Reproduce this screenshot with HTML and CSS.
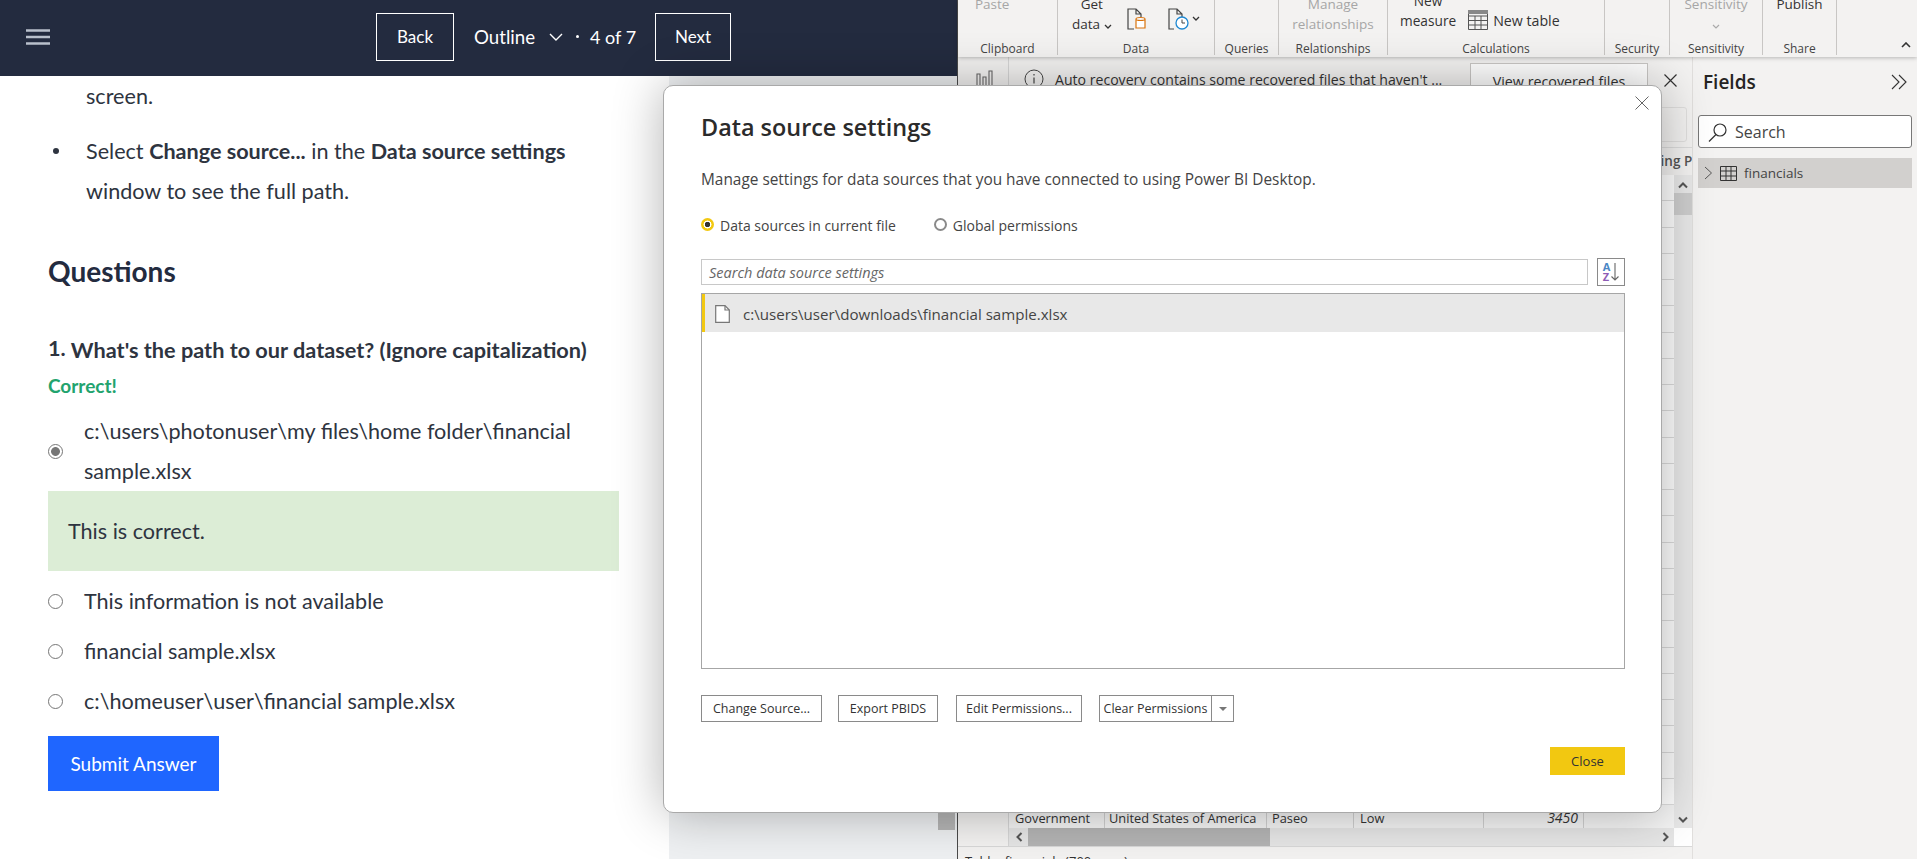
FILE: index.html
```html
<!DOCTYPE html>
<html lang="en">
<head>
  <meta charset="UTF-8" />
  <title>Data source settings</title>
  <link rel="stylesheet" href="styles.css">
</head>
<body>
  <!-- Lab guide window -->
  <section class="course">
    <header class="course-head">
      <button class="menu-btn" aria-label="Menu">
        <svg viewBox="0 0 24 16" width="24" height="16"><path d="M0 1.5h24M0 8h24M0 14.5h24" stroke="#b9c0cc" stroke-width="2.4" /></svg>
      </button>
      <nav class="pager">
        <a class="pager-btn pager-back">Back</a>
        <span class="pager-title">Outline</span>
        <svg class="pager-chev" viewBox="0 0 14 8" width="14" height="8"><path d="M1 1l6 6 6-6" fill="none" stroke="#fff" stroke-width="1.4" /></svg>
        <span class="pager-dot"></span>
        <span class="pager-count">4 of 7</span>
        <a class="pager-btn pager-next">Next</a>
      </nav>
    </header>
    <div class="course-body">
      <main class="lesson">
        <ul class="steps">
          <li class="step-cont">screen.</li>
          <li>Select <b>Change source...</b> in the <b>Data source settings</b> window to see the full path.</li>
        </ul>
        <h2>Questions</h2>
        <p class="question"><span class="q-num">1.</span> What's the path to our dataset? (Ignore capitalization)</p>
        <p class="verdict">Correct!</p>
        <label class="option option-two">
          <input type="radio" name="q1" checked>
          <span>c:\users\photonuser\my files\home folder\financial sample.xlsx</span>
        </label>
        <div class="feedback">This is correct.</div>
        <label class="option"><input type="radio" name="q1"><span>This information is not available</span></label>
        <label class="option"><input type="radio" name="q1"><span>financial sample.xlsx</span></label>
        <label class="option"><input type="radio" name="q1"><span>c:\homeuser\user\financial sample.xlsx</span></label>
        <button class="submit">Submit Answer</button>
      </main>
      <aside class="lesson-side">
        <div class="side-scroll"></div>
      </aside>
    </div>
  </section>

  <!-- Power BI window -->
  <section class="pbi">
    <div class="ribbon">
      <div class="rib-group rib-clipboard">
        <div class="rib-tools"><div class="tool off">Paste<br>&nbsp;</div></div>
        <div class="rib-label">Clipboard</div>
      </div>
      <div class="rib-group rib-data">
        <div class="rib-tools">
          <div class="tool">Get<br>data <svg class="mini" viewBox="0 0 8 5" width="8" height="5"><path d="M1 1l3 3 3-3" fill="none" stroke="#333" stroke-width="1.3" /></svg></div>
          <svg class="doc-icon" viewBox="0 0 20 22" width="20" height="22">
            <path d="M7 21H1V1h8l5 5v3M9 1v5h5" fill="none" stroke="#444" stroke-width="1.2" />
            <path d="M9 11c0-2 9-2 9 0v9H9zM9 11c0 2 9 2 9 0" fill="#fff" stroke="#d9730d" stroke-width="1.2" />
          </svg>
          <div class="doc-pair">
            <svg class="doc-icon" viewBox="0 0 21 22" width="21" height="22">
              <path d="M6 21H1V1h8l5 5v3M9 1v5h5" fill="none" stroke="#444" stroke-width="1.2" />
              <circle cx="14" cy="15" r="6" fill="#fff" stroke="#1e88d2" stroke-width="1.3" />
              <path d="M14 11.5V15h3" fill="none" stroke="#444" stroke-width="1" />
            </svg>
            <svg class="mini" viewBox="0 0 8 5" width="8" height="5"><path d="M1 1l3 3 3-3" fill="none" stroke="#333" stroke-width="1.3" /></svg>
          </div>
        </div>
        <div class="rib-label">Data</div>
      </div>
      <div class="rib-group rib-queries">
        <div class="rib-tools"></div>
        <div class="rib-label">Queries</div>
      </div>
      <div class="rib-group rib-rel">
        <div class="rib-tools"><div class="tool off">Manage<br>relationships</div></div>
        <div class="rib-label">Relationships</div>
      </div>
      <div class="rib-group rib-calc">
        <div class="rib-tools">
          <div class="tool tool-measure">New<br>measure</div>
          <div class="tool-inline">
            <svg viewBox="0 0 20 20" width="20" height="20"><path d="M.5.5h19v19H.5zM.5 6h19M.5 10.5h19M.5 15h19M7 6v13.500M13 6v13.500" fill="none" stroke="#555" /><path d="M0 0h20v4H0z" fill="#888" /></svg>
            New table
          </div>
        </div>
        <div class="rib-label">Calculations</div>
      </div>
      <div class="rib-group rib-sec">
        <div class="rib-tools"></div>
        <div class="rib-label">Security</div>
      </div>
      <div class="rib-group rib-sens">
        <div class="rib-tools"><div class="tool off">Sensitivity<br><svg class="mini" viewBox="0 0 8 5" width="8" height="5"><path d="M1 1l3 3 3-3" fill="none" stroke="#aaa" stroke-width="1.2" /></svg></div></div>
        <div class="rib-label">Sensitivity</div>
      </div>
      <div class="rib-group rib-share">
        <div class="rib-tools"><div class="tool">Publish<br>&nbsp;</div></div>
        <div class="rib-label">Share</div>
      </div>
      <div class="rib-collapse">
        <svg viewBox="0 0 10 6" width="10" height="6"><path d="M1 5l4-4 4 4" fill="none" stroke="#333" stroke-width="1.6" /></svg>
      </div>
    </div>

    <div class="pbi-main">
      <div class="report">
        <div class="report-top">
          <div class="rail">
            <svg viewBox="0 0 18 16" width="18" height="16"><path d="M1 16V4h3v12M7 16V7h3v9M13 16V1h3v15" fill="none" stroke="#666" stroke-width="1.100" /></svg>
          </div>
          <div class="canvas">
            <div class="notice">
              <svg class="notice-icon" viewBox="0 0 20 20" width="20" height="20"><circle cx="10" cy="10" r="9" fill="none" stroke="#444" /><path d="M10 8.500v6M10 5v1.500" stroke="#444" stroke-width="1.200" /></svg>
              <span class="notice-text">Auto recovery contains some recovered files that haven't ...</span>
              <span class="notice-btn">View recovered files</span>
              <svg class="notice-x" viewBox="0 0 13 13" width="13" height="13"><path d="M.5.5l12 12M12.500.5l-12 12" stroke="#333" stroke-width="1.200" /></svg>
            </div>
            <div class="formula"><div class="formula-box"></div></div>
            <div class="table-head"><span>Manufacturing Price</span></div>
            <div class="table-wrap">
              <div class="table-col">
                <div class="table-rows">
                  <div class="row"></div><div class="row"></div><div class="row"></div><div class="row"></div>
                  <div class="row"></div><div class="row"></div><div class="row"></div><div class="row"></div>
                  <div class="row"></div><div class="row"></div><div class="row"></div><div class="row"></div>
                  <div class="row"></div><div class="row"></div><div class="row"></div><div class="row"></div>
                  <div class="row"></div><div class="row"></div><div class="row"></div><div class="row"></div>
                  <div class="row"></div><div class="row"></div><div class="row"></div><div class="row"></div>
                  <div class="row row-data">
                    <div class="cell c1">Government</div>
                    <div class="cell c2">United States of America</div>
                    <div class="cell c3">Paseo</div>
                    <div class="cell c4">Low</div>
                    <div class="cell c5">3450</div>
                    <div class="cell c6"></div>
                  </div>
                </div>
                <div class="hscroll">
                  <svg viewBox="0 0 8 10" width="8" height="10"><path d="M6.500 1l-4 4 4 4" fill="none" stroke="#555" stroke-width="2" /></svg>
                  <div class="hthumb"></div>
                  <svg class="hright" viewBox="0 0 8 10" width="8" height="10"><path d="M1.500 1l4 4-4 4" fill="none" stroke="#555" stroke-width="2" /></svg>
                </div>
              </div>
              <div class="vscroll">
                <svg viewBox="0 0 10 8" width="10" height="8"><path d="M1 6.500l4-4 4 4" fill="none" stroke="#555" stroke-width="2" /></svg>
                <div class="vthumb"></div>
                <svg class="vdown" viewBox="0 0 10 8" width="10" height="8"><path d="M1 1.500l4 4 4-4" fill="none" stroke="#555" stroke-width="2" /></svg>
                <div class="vcorner"></div>
              </div>
            </div>
          </div>
        </div>
        <div class="status">Table: financials (700 rows)</div>
      </div>

      <aside class="fields">
        <div class="fields-head">
          <span>Fields</span>
          <svg viewBox="0 0 16 16" width="16" height="16"><path d="M1 1l7 7-7 7M8 1l7 7-7 7" fill="none" stroke="#333" stroke-width="1.100" /></svg>
        </div>
        <div class="fields-search">
          <svg viewBox="0 0 20 20" width="20" height="20"><circle cx="12" cy="8" r="6" fill="none" stroke="#333" stroke-width="1.200" /><path d="M8 12.500L1 19.500" stroke="#333" stroke-width="1.200" /></svg>
          Search
        </div>
        <div class="fields-row">
          <svg viewBox="0 0 9 14" width="9" height="14"><path d="M1 1l6.500 6L1 13" fill="none" stroke="#555" /></svg>
          <svg class="tbl-icon" viewBox="0 0 17 15" width="17" height="15"><path d="M.5.5h16v14H.5zM.5 5h16M.5 10h16M6 .5v14M11 .5v14" fill="none" stroke="#333" /></svg>
          financials
        </div>
      </aside>
    </div>
  </section>

  <!-- Dialog, sits over both windows -->
  <div class="dialog">
    <svg class="dialog-x" viewBox="0 0 14 14" width="14" height="14"><path d="M.5.5l13 13M13.500.5l-13 13" stroke="#666" /></svg>
    <h1>Data source settings</h1>
    <p class="dialog-note">Manage settings for data sources that you have connected to using Power BI Desktop.</p>
    <div class="scope">
      <span class="scope-item"><i class="dot dot-on"></i>Data sources in current file</span>
      <span class="scope-item"><i class="dot"></i>Global permissions</span>
    </div>
    <div class="search-row">
      <div class="search-box">Search data source settings</div>
      <div class="sort-btn">
        <span class="sort-letters"><span class="az-a">A</span><span class="az-z">Z</span></span>
        <svg viewBox="0 0 8 18" width="8" height="18"><path d="M4 0v17M.5 13.500L4 17l3.500-3.500" fill="none" stroke="#666" stroke-width="1.100" /></svg>
      </div>
    </div>
    <div class="source-list">
      <div class="source-row">
        <svg viewBox="0 0 15 18" width="15" height="18"><path d="M.7.7h9.300l4.300 4.300v12.300H.7z" fill="#fff" stroke="#777" stroke-width="1.200" /><path d="M10 .7v4.300h4.300" fill="none" stroke="#777" stroke-width="1.200" /></svg>
        c:\users\user\downloads\financial sample.xlsx
      </div>
    </div>
    <div class="actions">
      <button class="act act-change">Change Source...</button>
      <button class="act act-export">Export PBIDS</button>
      <button class="act act-edit">Edit Permissions...</button>
      <div class="split">
        <button class="act split-main">Clear Permissions</button>
        <button class="act split-arrow" aria-label="More"><i></i></button>
      </div>
    </div>
    <div class="dialog-foot"><button class="close-btn">Close</button></div>
  </div>
</body>
</html>
```

FILE: styles.css
```css
* {
  box-sizing: border-box;
}

body {
  margin: 0;
  width: 1917px;
  height: 859px;
  overflow: hidden;
  position: relative;
  display: flex;
  background: #fff;
  font-family: "Open Sans", sans-serif;
  color: #333;
}

button {
  font: inherit;
  cursor: pointer;
}

/* lab guide */
.course {
  width: 957px;
  height: 859px;
  display: flex;
  flex-direction: column;
  font-family: Lato, sans-serif;
  color: #2e3440;
}

.course-head {
  height: 76px;
  flex: none;
  background: #232b3f;
  display: flex;
  align-items: center;
  padding: 0 0 3px 26px;
}

.menu-btn {
  background: none;
  border: none;
  padding: 0;
  display: flex;
}

.pager {
  display: flex;
  align-items: center;
  margin-left: 326px;
  color: #fff;
  font-size: 18.700px;
}

.pager-btn {
  height: 48px;
  border: 1px solid #fff;
  display: flex;
  align-items: center;
  justify-content: center;
  font-size: 17px;
}

.pager-back {
  width: 78px;
}

.pager-next {
  width: 76px;
  margin-left: 19px;
}

.pager-title {
  margin-left: 20px;
  width: 62px;
}

.pager-chev {
  margin-left: 13px;
}

.pager-dot {
  width: 3px;
  height: 3px;
  border-radius: 50%;
  background: #fff;
  margin-left: 13px;
}

.pager-count {
  margin-left: 11px;
  font-size: 18px;
}

.course-body {
  flex: 1;
  display: flex;
  min-height: 0;
}

.lesson {
  width: 669px;
  flex: none;
  padding: 0 50px 0 48px;
  font-size: 21.600px;
}

.steps {
  margin: 0;
  padding: 0 0 0 38px;
  line-height: 40px;
  list-style: none;
}

.steps li {
  margin-bottom: 15px;
  position: relative;
}

.steps li::before {
  content: "";
  position: absolute;
  left: -33px;
  top: 17px;
  width: 6px;
  height: 6px;
  border-radius: 50%;
  background: #2e3440;
}

.steps .step-cont::before {
  display: none;
}

.steps b {
  font-weight: 700;
}

.lesson h2 {
  margin: 42px 0 0;
  font-size: 28px;
  line-height: 36px;
  font-weight: 700;
  color: #232b3f;
}

.question {
  margin: 47px 0 0;
  font-size: 21.700px;
  line-height: 28px;
  font-weight: 700;
}

.q-num {
  position: relative;
  top: -2px;
}

.verdict {
  margin: 9px 0 0;
  font-size: 19px;
  line-height: 26px;
  font-weight: 700;
  color: #22a36e;
}

.option {
  display: flex;
  align-items: center;
  gap: 21px;
  line-height: 40px;
  margin-top: 10px;
  width: 530px;
}

.option-two {
  margin-top: 12px;
}

.option input {
  appearance: none;
  flex: none;
  width: 15px;
  height: 15px;
  margin: 0;
  border: 1.5px solid #767676;
  border-radius: 50%;
  background: #fff;
}

.option input:checked {
  background: radial-gradient(circle, #767676 0, #767676 4px, #fff 4.800px);
}

.feedback {
  width: 571px;
  height: 80px;
  margin-bottom: 10px;
  padding: 0 20px;
  background: #dcedd6;
  display: flex;
  align-items: center;
}

.submit {
  display: block;
  width: 171px;
  height: 55px;
  margin-top: 15px;
  border: none;
  background: #1f66ff;
  color: #fff;
  font-size: 19px;
}

.lesson-side {
  flex: 1;
  background: #eef0f2;
  display: flex;
  justify-content: flex-end;
  padding: 20px 2px 0 0;
}

.side-scroll {
  width: 17px;
  height: 734px;
  background: #b5b5b5;
}

/* power bi window */
.pbi {
  flex: 1;
  height: 859px;
  display: flex;
  flex-direction: column;
  border-left: 1px solid #4a4a4a;
  background: #f3f2f1;
  font-size: 13px;
}

.ribbon {
  height: 57px;
  flex: none;
  display: flex;
  background: #f3f2f1;
  box-shadow: 0 1px 4px rgba(0, 0, 0, 0.25);
  position: relative;
}

.rib-group {
  height: 55px;
  border-right: 1px solid #c8c6c4;
  display: flex;
  flex-direction: column;
}

.rib-clipboard { width: 100px; }
.rib-data { width: 157px; }
.rib-queries { width: 64px; }
.rib-rel { width: 109px; }
.rib-calc { width: 217px; }
.rib-sec { width: 65px; }
.rib-sens { width: 93px; }
.rib-share { width: 74px; }

.rib-tools {
  height: 41px;
  flex: none;
  padding-bottom: 7px;
  display: flex;
  align-items: flex-end;
  justify-content: center;
  overflow: hidden;
}

.rib-label {
  text-align: center;
  font-size: 12px;
  line-height: 16px;
  color: #444;
}

.tool {
  line-height: 20px;
  text-align: center;
  font-size: 13.500px;
  flex: none;
}

.tool.off {
  color: #a6a6a6;
}

.rib-clipboard .rib-tools {
  justify-content: flex-start;
  padding-left: 17px;
}

.rib-data .rib-tools {
  justify-content: flex-start;
  padding-left: 14px;
  gap: 15px;
}

.rib-data .doc-icon {
  margin-bottom: 4px;
}

.doc-pair {
  display: flex;
  align-items: flex-start;
  gap: 3px;
  margin-left: 6px;
}

.doc-pair .mini {
  margin-top: 8px;
}

.rib-calc .rib-tools {
  justify-content: flex-start;
  padding-left: 12px;
  gap: 12px;
}

.tool-measure {
  margin-bottom: 3px;
  font-size: 13.700px;
}

.tool-inline {
  display: flex;
  align-items: center;
  gap: 5px;
  margin-bottom: 4px;
  font-size: 14.200px;
}

.rib-collapse {
  flex: 1;
  display: flex;
  align-items: flex-end;
  justify-content: flex-end;
  padding: 0 6px 9px 0;
}

.pbi-main {
  flex: 1;
  display: flex;
  min-height: 0;
}

.report {
  width: 734px;
  flex: none;
  display: flex;
  flex-direction: column;
}

.report-top {
  flex: 1;
  display: flex;
  min-height: 0;
}

.rail {
  width: 51px;
  flex: none;
  border-right: 1px solid #d6d6d6;
  padding: 13px 0 0 18px;
}

.canvas {
  flex: 1;
  display: flex;
  flex-direction: column;
  min-width: 0;
}

.notice {
  height: 50px;
  flex: none;
  display: flex;
  align-items: flex-start;
  padding: 6px 0 0 15px;
}

.notice-icon {
  margin-top: 6px;
}

.notice-text {
  margin: 7px 0 0 11px;
  width: 415px;
  white-space: nowrap;
  font-size: 14.100px;
}

.notice-btn {
  width: 178px;
  height: 38px;
  background: #fff;
  border: 1px solid #c8c6c4;
  text-align: center;
  line-height: 36px;
  font-size: 14.300px;
}

.notice-x {
  margin: 11px 0 0 16px;
}

.formula {
  height: 40px;
  flex: none;
  display: flex;
  justify-content: flex-end;
  padding-right: 5px;
}

.formula-box {
  width: 60px;
  height: 35px;
  border: 1px solid #e0dfde;
  border-radius: 3px;
}

.table-head {
  height: 28px;
  flex: none;
  border-top: 1px solid #dcdcdc;
  padding-left: 575px;
  overflow: hidden;
  white-space: nowrap;
  line-height: 27px;
  font-weight: 600;
  font-size: 13.500px;
  color: #555;
}

.table-wrap {
  flex: 1;
  display: flex;
  min-height: 0;
}

.table-col {
  flex: 1;
  min-width: 0;
  display: flex;
  flex-direction: column;
}

.table-rows {
  flex: 1;
  min-height: 0;
  overflow: hidden;
  background: #fff;
}

.row {
  height: 26.250px;
  border-bottom: 1px solid #ddd;
}

.row-data {
  display: flex;
  height: 26px;
  border-bottom: none;
  line-height: 26px;
  font-size: 12.800px;
  background: #f4f4f4;
}

.cell {
  border-right: 1px solid #d0d0d0;
  padding-left: 6px;
  white-space: nowrap;
  overflow: hidden;
}

.c1 { width: 96px; }
.c2 { width: 162px; padding-left: 4px; }
.c3 { width: 87px; padding-left: 5px; }
.c4 { width: 130px; }
.c5 { width: 100px; padding-right: 5px; text-align: right; font-style: italic; font-size: 14px; }
.c6 { flex: 1; border-right: none; }

.hscroll {
  height: 18px;
  flex: none;
  background: #e6e6e6;
  display: flex;
  align-items: center;
  padding: 0 4px 0 6px;
}

.hthumb {
  width: 242px;
  height: 18px;
  margin-left: 5px;
  background: #b4b4b4;
}

.hright {
  margin-left: auto;
}

.vscroll {
  width: 18px;
  flex: none;
  background: #e8e8e8;
  display: flex;
  flex-direction: column;
  align-items: center;
  padding-top: 6px;
}

.vthumb {
  width: 100%;
  height: 22px;
  margin-top: 4px;
  background: #cdcdcd;
}

.vdown {
  margin-top: auto;
  margin-bottom: 4px;
}

.vcorner {
  width: 100%;
  height: 18px;
  flex: none;
  background: #fff;
}

.status {
  height: 13px;
  flex: none;
  padding: 5px 0 0 7px;
  border-top: 1px solid #d8d8d8;
  font-size: 13px;
  line-height: 18px;
  overflow: hidden;
}

.fields {
  flex: 1;
  border-left: 1px solid #e1dfdd;
  padding: 0 5px;
}

.fields-head {
  height: 50px;
  display: flex;
  align-items: center;
  justify-content: space-between;
  padding: 0 5px 0 5px;
  font-size: 19px;
  font-weight: 600;
  color: #252423;
}

.fields-search {
  height: 33px;
  margin-top: 8px;
  background: #fff;
  border: 1px solid #777;
  border-radius: 3px;
  display: flex;
  align-items: center;
  gap: 7px;
  padding-left: 9px;
  font-size: 16px;
  color: #444;
}

.fields-row {
  height: 30px;
  margin-top: 10px;
  background: #d2d0ce;
  display: flex;
  align-items: center;
  padding-left: 6px;
  font-size: 13.500px;
  color: #444;
}

.tbl-icon {
  margin: 0 7px 0 7px;
}

/* dialog */
.dialog {
  position: absolute;
  left: 663px;
  top: 85px;
  width: 999px;
  height: 728px;
  background: #fff;
  border: 1px solid #a9a9a9;
  border-radius: 10px;
  box-shadow: 0 0 50px rgba(0, 0, 0, 0.3);
  padding: 25px 36px 0 37px;
  color: #333;
}

.dialog-x {
  position: absolute;
  right: 12px;
  top: 10px;
}

.dialog h1 {
  margin: 0;
  font-size: 23.400px;
  line-height: 32px;
  font-weight: 600;
  color: #2b2b2b;
}

.dialog-note {
  margin: 27px 0 0;
  font-size: 15.400px;
  line-height: 20px;
  color: #444;
}

.scope {
  margin-top: 26px;
  display: flex;
  gap: 38px;
  font-size: 14px;
  line-height: 20px;
  color: #444;
}

.scope-item {
  display: flex;
  align-items: center;
  gap: 6px;
}

.dot {
  width: 13px;
  height: 13px;
  border: 2px solid #8a8a8a;
  border-radius: 50%;
  margin-top: -3px;
}

.dot-on {
  border: none;
  background: radial-gradient(circle, #333 0, #333 2.500px, #fff 3px, #fff 3.800px, #f2c811 4.200px);
}

.search-row {
  margin-top: 22px;
  display: flex;
  align-items: center;
  justify-content: space-between;
}

.search-box {
  width: 887px;
  height: 26px;
  border: 1px solid #c8c8c8;
  padding-left: 7px;
  font-style: italic;
  font-size: 14.500px;
  line-height: 25px;
  color: #666;
}

.sort-btn {
  width: 28px;
  height: 28px;
  border: 1px solid #8a8a8a;
  display: flex;
  align-items: center;
  justify-content: center;
  gap: 1px;
}

.sort-letters {
  display: flex;
  flex-direction: column;
  font-size: 11px;
  line-height: 10px;
  font-weight: 700;
}

.az-a {
  color: #4a86c5;
}

.az-z {
  color: #8e5cb5;
}

.source-list {
  margin-top: 7px;
  height: 376px;
  border: 1px solid #a6a6a6;
}

.source-row {
  height: 38px;
  background: #e8e8e8;
  border-left: 3px solid #f2c811;
  display: flex;
  align-items: center;
  gap: 13px;
  padding-left: 10px;
  padding-top: 1px;
  font-size: 15.100px;
  color: #444;
}

.actions {
  margin-top: 26px;
  display: flex;
}

.act {
  height: 27px;
  background: #fff;
  border: 1px solid #8a8a8a;
  padding: 0;
  font-size: 12.500px;
  color: #333;
}

.act-change { width: 121px; }
.act-export { width: 100px; margin-left: 16px; }
.act-edit { width: 126px; margin-left: 18px; }

.split {
  display: flex;
  margin-left: 17px;
}

.split-main {
  width: 113px;
}

.split-arrow {
  width: 23px;
  margin-left: -1px;
  display: flex;
  align-items: center;
  justify-content: center;
}

.split-arrow i {
  border-top: 4px solid #777;
  border-left: 4px solid transparent;
  border-right: 4px solid transparent;
}

.dialog-foot {
  margin-top: 25px;
  display: flex;
  justify-content: flex-end;
}

.close-btn {
  width: 75px;
  height: 28px;
  border: none;
  background: #f2c811;
  font-size: 13px;
  color: #333;
}
```
